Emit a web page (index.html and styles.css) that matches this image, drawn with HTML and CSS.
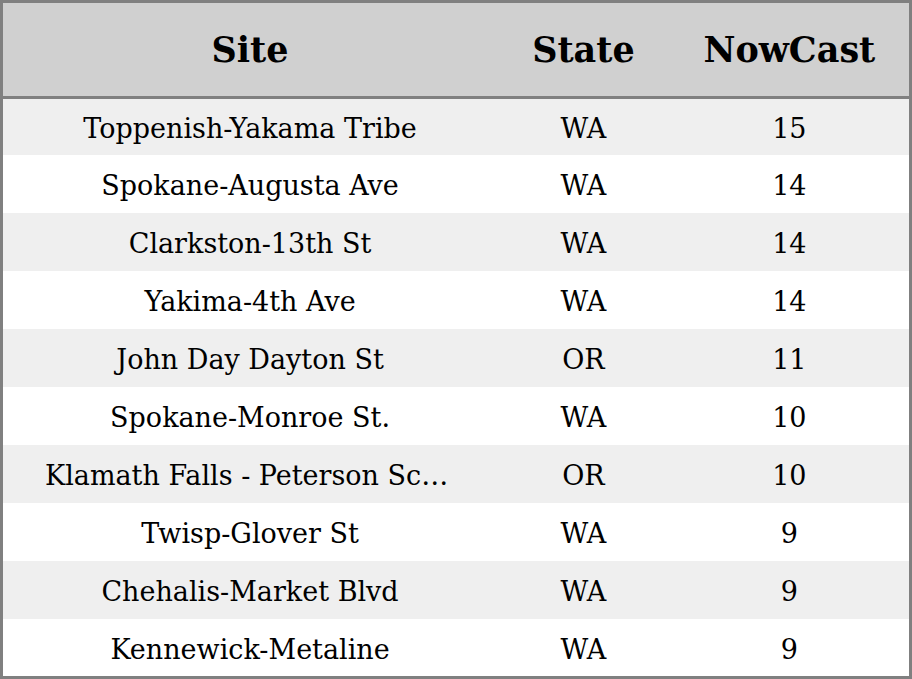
FILE: index.html
```html
<!DOCTYPE html>
<html>
<head>
<meta charset="utf-8">
<link rel="stylesheet" href="styles.css">
</head>
<body>
<table class="grid">
  <colgroup>
    <col class="c-site">
    <col class="c-state">
    <col class="c-now">
  </colgroup>
  <thead>
    <tr class="head"><th>Site</th><th>State</th><th>NowCast</th></tr>
  </thead>
  <tbody>
    <tr><td class="site">Toppenish-Yakama Tribe</td><td>WA</td><td>15</td></tr>
    <tr><td class="site">Spokane-Augusta Ave</td><td>WA</td><td>14</td></tr>
    <tr><td class="site">Clarkston-13th St</td><td>WA</td><td>14</td></tr>
    <tr><td class="site">Yakima-4th Ave</td><td>WA</td><td>14</td></tr>
    <tr><td class="site">John Day Dayton St</td><td>OR</td><td>11</td></tr>
    <tr><td class="site">Spokane-Monroe St.</td><td>WA</td><td>10</td></tr>
    <tr><td class="site">Klamath Falls - Peterson School</td><td>OR</td><td>10</td></tr>
    <tr><td class="site">Twisp-Glover St</td><td>WA</td><td>9</td></tr>
    <tr><td class="site">Chehalis-Market Blvd</td><td>WA</td><td>9</td></tr>
    <tr><td class="site">Kennewick-Metaline</td><td>WA</td><td>9</td></tr>
  </tbody>
</table>
</body>
</html>
```

FILE: styles.css
```css
html, body {
  margin: 0;
  padding: 0;
  background: #ffffff;
}
.grid {
  width: 912px;
  border-collapse: collapse;
  table-layout: fixed;
  border: 3px solid #808080;
  font-family: "DejaVu Serif", serif;
  color: #000;
}
.c-site { width: 494px; }
.c-state { width: 172px; }
.c-now { width: 240px; }
.head th {
  background: #d0d0d0;
  height: 93px;
  padding: 0;
  font-size: 35px;
  font-weight: bold;
  text-align: center;
  vertical-align: middle;
  border-bottom: 3px solid #808080;
}
tbody td {
  height: 54px;
  padding: 4px 42px 0;
  font-size: 27px;
  line-height: 32px;
  text-align: center;
  vertical-align: middle;
  white-space: nowrap;
  overflow: hidden;
  text-overflow: ellipsis;
}
tbody tr:first-child td {
  height: 52px;
}
tbody tr:last-child td {
  height: 53px;
}
tbody tr:nth-child(odd) td {
  background: #efefef;
}
tbody tr:nth-child(even) td {
  background: #ffffff;
}
tbody td:not(.site) {
  padding: 4px 0 0;
}
```
